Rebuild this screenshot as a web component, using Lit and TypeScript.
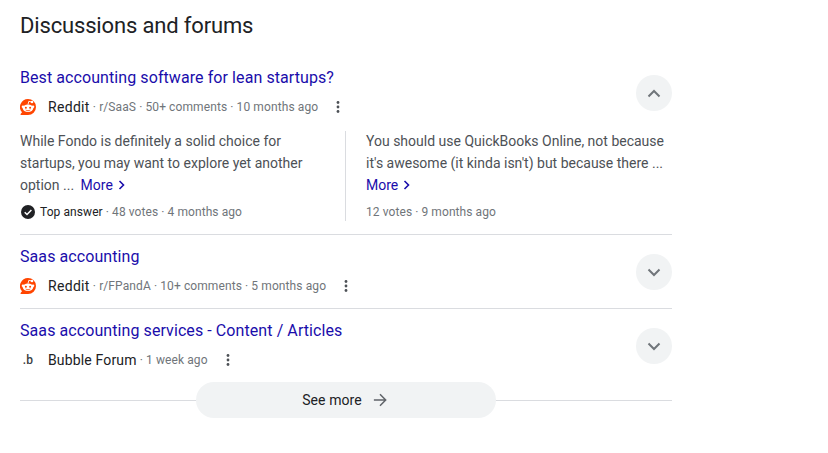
import { LitElement, html, css } from "lit";
import { customElement } from "lit/decorators.js";

const reddit = html`<svg class="fav" viewBox="0 0 16 16">
  <path d="M8 0a8 8 0 0 1 0 16H1.100c-.6 0-.9-.7-.5-1.100l1.400-1.600A8 8 0 0 1 8 0z" fill="#ff4500"/>
  <ellipse cx="8" cy="9.300" rx="5.200" ry="3.800" fill="#fff"/>
  <circle cx="3" cy="7.800" r="1.300" fill="#fff"/><circle cx="13" cy="7.800" r="1.300" fill="#fff"/>
  <circle cx="5.900" cy="8.700" r="1" fill="#ff4500"/><circle cx="10.100" cy="8.700" r="1" fill="#ff4500"/>
  <path d="M5.700 11c1.300.9 3.300.9 4.600 0" fill="none" stroke="#ff4500" stroke-width=".8"/>
  <path d="M8 5.500 8.800 2.300l2.500.6" fill="none" stroke="#fff" stroke-width=".9"/>
  <circle cx="12" cy="3" r="1.300" fill="#fff"/>
</svg>`;
const bubble = html`<span class="fav bub">.b</span>`;
const dots = html`<svg class="dots" viewBox="0 0 4 16"><circle cx="2" cy="3.500" r="1.400"/><circle cx="2" cy="8" r="1.400"/><circle cx="2" cy="12.500" r="1.400"/></svg>`;
const chevron = (up: boolean) => html`<svg class="chev" viewBox="0 0 14 9"><path d=${up ? "M1.500 7.500 7 2l5.500 5.500" : "M1.500 1.500 7 7l5.500-5.500"} fill="none" stroke="#70757a" stroke-width="2"/></svg>`;
const more = html`<a class="more">More<svg viewBox="0 0 7 10"><path d="M1.500 1 5.500 5l-4 4" fill="none" stroke="#1a0dab" stroke-width="1.600"/></svg></a>`;
const check = html`<svg class="check" viewBox="0 0 14 14"><circle cx="7" cy="7" r="7" fill="#202124"/><path d="M3.700 7.200 6 9.500l4.400-4.600" fill="none" stroke="#fff" stroke-width="1.500"/></svg>`;

@customElement("app-root")
export class AppRoot extends LitElement {
  static styles = css`
    :host { display: block; width: 828px; height: 453px; background: #fff; font-family: Roboto, "Liberation Sans", sans-serif; overflow: hidden; }
    .wrap { width: 652px; margin-left: 20px; }
    h2 { margin: 0; padding-top: 12px; height: 56px; box-sizing: border-box; font: 400 22px/28px Roboto, sans-serif; letter-spacing: -0.16px; color: #202124; }
    .row { padding: 9px 0 12px; border-bottom: 1px solid #dadce0; }
    .row.open { padding-bottom: 13px; }
    .row.last { border-bottom: 0; padding-bottom: 0; }
    .head { display: flex; justify-content: space-between; align-items: flex-start; height: 52px; }
    .title { display: block; font-size: 16px; line-height: 26px; letter-spacing: 0.08px; color: #1a0dab; }
    .meta { display: flex; align-items: center; height: 20px; margin-top: 6px; font-size: 12px; letter-spacing: 0.1px; color: #70757a; white-space: pre; }
    .fav { width: 16px; height: 16px; margin-right: 12px; flex: none; }
    .bub { font-size: 12px; font-weight: 500; color: #3c4043; text-align: center; line-height: 16px; }
    .src { font-size: 14px; color: #202124; letter-spacing: 0.15px; }
    .src.r { letter-spacing: 0.32px; }
    .dots { width: 4px; height: 16px; fill: #4d5156; margin-left: 18px; }
    .toggle { width: 36px; height: 36px; margin-top: 10px; border-radius: 50%; background: #f1f3f4; display: flex; align-items: center; justify-content: center; flex: none; }
    .chev { width: 14px; height: 9px; }
    .answers { display: flex; margin-top: 14px; height: 90px; }
    .ans { width: 326px; box-sizing: border-box; font-size: 14px; line-height: 22px; color: #4d5156; }
    .ans.a { padding-right: 20px; border-right: 1px solid #dadce0; }
    .ans.b { padding-left: 20px; }
    .lines { margin-top: -1px; }
    .line { display: block; white-space: pre; }
    .more { color: #1a0dab; margin-left: 3px; }
    .ans.b .more { margin-left: 0; }
    .more svg { width: 7px; height: 10px; margin-left: 5px; }
    .foot { display: flex; align-items: center; height: 20px; margin-top: 6px; font-size: 12px; letter-spacing: 0.08px; color: #70757a; white-space: pre; }
    .foot b { font-weight: 400; color: #202124; }
    .check { width: 14px; height: 14px; margin: 0 5px 0 1px; }
    .seemore { position: relative; display: flex; justify-content: center; margin-top: 12px; }
    .seemore::before { content: ""; position: absolute; left: 0; right: 0; top: 18px; height: 1px; background: #dadce0; }
    .btn { position: relative; box-sizing: border-box; width: 300px; height: 36px; padding-right: 3px; border-radius: 18px; background: #f1f3f4; display: flex; align-items: center; justify-content: center; gap: 11px; font-size: 14px; letter-spacing: 0.1px; color: #202124; }
    .btn svg { width: 14px; height: 14px; }
  `;

  render() {
    return html`<div class="wrap">
      <h2>Discussions and forums</h2>
      <div class="row open">
        <div class="head">
          <div>
            <a class="title">Best accounting software for lean startups?</a>
            <div class="meta">${reddit}<span class="src r">Reddit</span> · r/SaaS · 50+ comments · 10 months ago${dots}</div>
          </div>
          <div class="toggle">${chevron(true)}</div>
        </div>
        <div class="answers">
          <div class="ans a">
            <div class="lines">
              <span class="line">While Fondo is definitely a solid choice for</span>
              <span class="line">startups, you may want to explore yet another</span>
              <span class="line">option ... ${more}</span>
              <div class="foot">${check}<b>Top answer</b> · 48 votes · 4 months ago</div>
            </div>
          </div>
          <div class="ans b">
            <div class="lines">
              <span class="line">You should use QuickBooks Online, not because</span>
              <span class="line">it's awesome (it kinda isn't) but because there ...</span>
              <span class="line">${more}</span>
              <div class="foot">12 votes · 9 months ago</div>
            </div>
          </div>
        </div>
      </div>
      <div class="row">
        <div class="head">
          <div>
            <a class="title">Saas accounting</a>
            <div class="meta">${reddit}<span class="src r">Reddit</span> · r/FPandA · 10+ comments · 5 months ago${dots}</div>
          </div>
          <div class="toggle">${chevron(false)}</div>
        </div>
      </div>
      <div class="row last">
        <div class="head">
          <div>
            <a class="title">Saas accounting services - Content / Articles</a>
            <div class="meta">${bubble}<span class="src">Bubble Forum</span> · 1 week ago${dots}</div>
          </div>
          <div class="toggle">${chevron(false)}</div>
        </div>
      </div>
      <div class="seemore">
        <div class="btn">See more<svg viewBox="0 0 16 16"><path d="M1 8h13.500M8 1.500 14.500 8 8 14.500" fill="none" stroke="#5f6368" stroke-width="1.700"/></svg></div>
      </div>
    </div>`;
  }
}
